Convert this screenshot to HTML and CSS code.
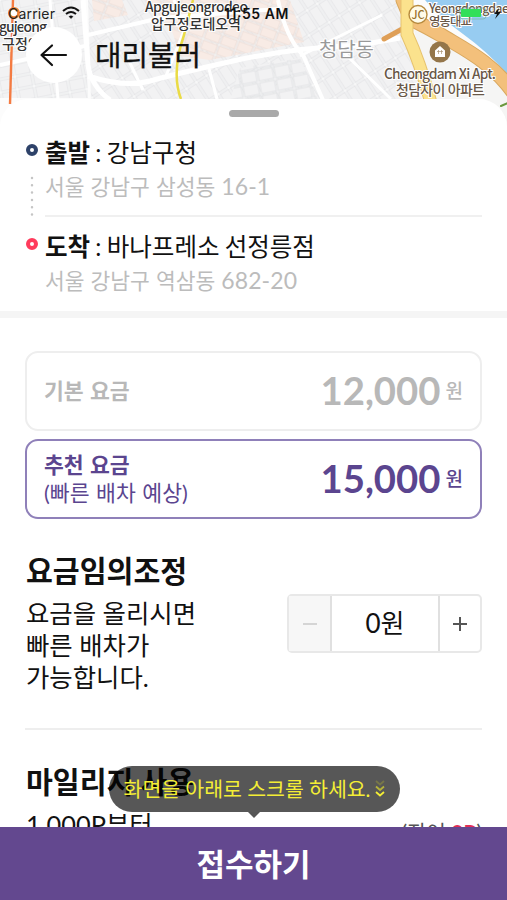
FILE: index.html
```html
<!DOCTYPE html>
<html lang="ko">
<head>
<meta charset="utf-8">
<title>대리불러</title>
<link rel="stylesheet" href="styles.css">
</head>
<body>
<div class="app">
  <svg class="map" viewBox="0 0 507 135" width="507" height="135">
    <defs>
      <pattern id="blocks" width="17" height="13" patternUnits="userSpaceOnUse" patternTransform="rotate(-11)">
        <rect x="1" y="1" width="15" height="11" fill="#f2f2f3" stroke="#dfe0e2" stroke-width=".8"/>
      </pattern>
      <pattern id="slant" width="12" height="22" patternUnits="userSpaceOnUse" patternTransform="rotate(-33)">
        <rect x="1" y="1" width="10" height="20" fill="#f2f2f3" stroke="#dcdde0" stroke-width=".8"/>
      </pattern>
      <pattern id="shops" width="17" height="11" patternUnits="userSpaceOnUse" patternTransform="rotate(20)">
        <rect x="1" y="1" width="15" height="9" fill="#f8ebe5" stroke="#eadbd4" stroke-width=".8"/>
      </pattern>
    </defs>
    <rect width="507" height="135" fill="#fcfcfc"/>
    <path d="M0 0H84L88 98H0Z" fill="url(#blocks)"/>
    <path d="M88 0H400L430 135H92Z" fill="url(#slant)"/>
    <path d="M92 0h30l6 15-34 6zM145 0H290l14 42-94 18-30-4-9-28z" fill="url(#shops)"/>
    <path d="M240 68 300 58 318 100H230Z" fill="url(#blocks)"/>
    <g fill="none" stroke="#fff">
      <path d="M83 0 88 65Q91 86 110 100M88 76Q125 88 150 81T233 61T360 45L400 38" stroke-width="5"/>
      <path d="M278 0Q286 38 303 55L323 100M0 65 85 46M88 35 160 18 278 9" stroke-width="4"/>
      <path d="M126 55 143 90M174 0 185 28 166 76M209 69 217 99M340 49 391 99M300 56 382 15M50 0 58 99" stroke-width="3"/>
    </g>
    <path d="M425 0H507V74Q488 52 463 34T425 0Z" fill="#97ccf1"/>
    <path d="M414 30Q460 45 482 64T507 96V135H440Z" fill="#f5f5f4"/>
    <g fill="none" stroke-linecap="round">
      <path d="M384 39 404 28Q410 22 409 9" stroke="#df9f57" stroke-width="5"/>
      <path d="M403 0 411 19Q427 27 441 35C462 48 493 62 515 95" stroke="#d9a85f" stroke-width="15"/>
      <path d="M403 0 411 19Q427 27 441 35C462 48 493 62 515 95" stroke="#f3c07b" stroke-width="13"/>
      <path d="M407 0 407 34Q420 62 431 103" stroke="#e7c36e" stroke-width="13"/>
      <path d="M407 0 407 34Q420 62 431 103" stroke="#fbe28d" stroke-width="11"/>
      <path d="M501 106 510 102" stroke="#6b983e" stroke-width="2"/>
    </g>
    <path d="M193 0 184 35Q171 73 181 99" fill="none" stroke="#eadb45" stroke-width="2.5"/>
    <path d="M13 0 10 104" stroke="#f47b42" stroke-width="2.4"/>
    <circle cx="14" cy="13" r="4.6" fill="#fff" stroke="#ee7f30" stroke-width="2.8"/>
    <circle cx="418" cy="14.500" r="9" fill="#fffbe8" stroke="#b78a3d" stroke-width="1.4"/>
    <text class="jc" x="411.500" y="18.500" textLength="13">JC</text>
    <circle cx="440" cy="52" r="10.500" fill="#94764a"/>
    <path d="M435 50.500 440 46 445 50.500V57H435Z" fill="#fff"/>
    <path d="M438.500 50v4M441.500 50v4M437 51.500h6" stroke="#aa9471" stroke-width=".7"/>
    <g class="place">
      <text x="145" y="12" textLength="103">Apgujeongrodeo</text>
      <text x="151" y="29" textLength="90">압구정로데오역</text>
      <text x="-1" y="32" textLength="48">gujeong</text>
      <text x="2" y="49" textLength="39">구정역</text>
    </g>
    <g class="place brown">
      <text class="small" x="429" y="12.500" textLength="80">Yeongdongdae</text>
      <text class="small" x="429" y="26" textLength="43">영동대교</text>
      <text x="384" y="79" textLength="112">Cheongdam Xi Apt.</text>
      <text x="396" y="95" textLength="89">청담자이 아파트</text>
    </g>
    <text class="district" x="319" y="57" textLength="55">청담동</text>
    <text class="status" x="8" y="19" textLength="47">Carrier</text>
    <text class="status clock" x="224" y="18.500" textLength="64.500">11:55 AM</text>
    <g fill="none" stroke="#111" stroke-width="2">
      <path d="M63 11Q71 4 79 11M66 14Q71 10 76 14"/>
      <path d="M69 16.500 71 18.500 73 16.500Q71 15 69 16.500Z" fill="#111" stroke-width=".5"/>
    </g>
    <rect x="460" y="8" width="26" height="11" rx="3" fill="none" stroke="#77b4a0" stroke-width=".7"/>
    <rect x="461" y="9" width="20" height="8" rx="1" fill="#32df59"/>
    <path d="M499 8 494 14H497L495 19 501 12H498Z" fill="#111"/>
  </svg>

  <header class="header">
    <button class="back" aria-label="뒤로">
      <svg width="56" height="56" viewBox="0 0 56 56"><path d="M40 28H16M26 18.500 15.500 28 26 38" fill="none" stroke="#111" stroke-width="2.2" stroke-linecap="round" stroke-linejoin="round"/></svg>
    </button>
    <h1 class="title">대리불러</h1>
  </header>

  <main class="sheet">
    <div class="handle"></div>
    <section class="route">
      <div class="rail">
        <i class="dot"></i>
        <svg class="dots" width="4" height="42" viewBox="0 0 4 42"><path d="M2 2V41" stroke="#c5c5c5" stroke-width="2.500" stroke-linecap="round" stroke-dasharray="0 7.300"/></svg>
        <i class="dot dot-end"></i>
      </div>
      <div class="stops">
        <div class="stop">
          <p class="name"><b>출발</b> : 강남구청</p>
          <p class="address">서울 강남구 삼성동 <span class="lot">16-1</span></p>
        </div>
        <div class="stop">
          <p class="name"><b>도착</b> : 바나프레소 선정릉점</p>
          <p class="address">서울 강남구 역삼동 <span class="lot">682-20</span></p>
        </div>
      </div>
    </section>

    <section class="fares">
      <div class="fare">
        <p class="fare-label"><b>기본 요금</b></p>
        <p class="price"><span class="amount">12,000</span><span class="won">원</span></p>
      </div>
      <div class="fare selected">
        <p class="fare-label"><b>추천 요금</b><br>(빠른 배차 예상)</p>
        <p class="price"><span class="amount">15,000</span><span class="won">원</span></p>
      </div>
    </section>

    <section class="adjust">
      <div>
        <h2>요금임의조정</h2>
        <p class="desc">요금을 올리시면<br>빠른 배차가<br>가능합니다.</p>
      </div>
      <div class="stepper">
        <button class="step off" aria-label="감소"><svg width="14" height="14"><path d="M0 7H14" stroke="#d5d5d5" stroke-width="2"/></svg></button>
        <span class="value">0원</span>
        <button class="step" aria-label="증가"><svg width="14" height="14"><path d="M0 7H14M7 0V14" stroke="#555" stroke-width="2"/></svg></button>
      </div>
    </section>

    <section class="mileage">
      <h2>마일리지 사용</h2>
      <div class="mileage-row">
        <p class="desc">1,000P부터</p>
        <p class="balance">(잔여 <b>0P</b>)</p>
      </div>
    </section>
  </main>

  <div class="hint">
    <span>화면을 아래로 스크롤 하세요.</span>
    <svg width="10" height="18" viewBox="0 0 10 18" fill="none" stroke-width="1.8"><path d="M1 1 5 4.500 9 1" stroke="#777748"/><path d="M1 6.500 5 10 9 6.500" stroke="#b5b33a"/><path d="M1 12 5 15.500 9 12" stroke="#f4ee35"/></svg>
  </div>
  <button class="submit">접수하기</button>
</div>
</body>
</html>
```
FILE: styles.css
```css
* { box-sizing: border-box; margin: 0; padding: 0; }
body { width: 507px; height: 900px; overflow: hidden; background: #fff; color: #111; font-family: Lato, "Noto Sans CJK KR", sans-serif; }
button { border: 0; background: none; font: inherit; }
.app { position: relative; display: flex; flex-direction: column; height: 900px; overflow: hidden; }
.map { position: absolute; top: 0; left: 0; }
.map text { font-family: "Noto Sans CJK KR", sans-serif; }
.place text { font-size: 14px; font-weight: 500; fill: #333; stroke: #fff; stroke-width: 2px; paint-order: stroke; }
.map .brown text { fill: #695747; }
.map .place .small { font-size: 12.500px; }
.map .jc { font-size: 11px; font-weight: 500; fill: #98722f; }
.map .district { font-size: 20px; fill: #999; stroke: #fff; stroke-width: 2px; paint-order: stroke; }
.map .status { font-family: Inter, sans-serif; font-size: 14px; fill: #222; }
.map .clock { font-weight: 600; fill: #111; }

.header { position: relative; display: flex; gap: 13px; height: 99px; padding: 27px 0 0 26px; flex: none; }
.back { width: 56px; height: 56px; border-radius: 50%; background: #fff; }
.back svg { display: block; }
.title { font-size: 28.800px; font-weight: 400; line-height: 56px; -webkit-text-stroke: .3px #111; }

.sheet { position: relative; flex: none; height: 801px; background: #fff; border-radius: 28px 28px 0 0; }
.handle { width: 50px; height: 7px; margin: 0 auto; border-radius: 4px; background: #a9a9a9; transform: translateY(11px); }
.route { display: flex; height: 212px; padding: 28px 25px 0; border-bottom: 7px solid #f5f5f5; }
.rail { display: flex; flex-direction: column; align-items: center; width: 13px; margin-right: 7px; padding-top: 10px; }
.dot { width: 12px; height: 12px; border: 4px solid #2e4269; border-radius: 50%; }
.dot-end { border-color: #ff3b5c; }
.dots { margin: 20px 0; }
.stops { flex: 1; }
.stop { height: 94px; }
.stop:first-child { height: 83px; margin-bottom: 11px; border-bottom: 2px solid #f0f0f0; }
.name { font-size: 24.500px; line-height: 37px; word-spacing: -1px; }
.address { font-size: 21.500px; line-height: 31px; color: #bcbcbc; word-spacing: .5px; }
.lot { font-size: 23px; letter-spacing: .1px; }

.fares { display: flex; flex-direction: column; gap: 8px; padding: 33px 25px 0; }
.fare { display: flex; align-items: center; justify-content: space-between; height: 80px; padding: 0 17px; border: 2px solid #eee; border-radius: 13px; color: #b8b8b8; }
.selected { border-color: #8f80b9; color: #5b458f; }
.fare-label { font-size: 21.600px; line-height: 28px; word-spacing: 1px; }
.price { display: flex; align-items: center; gap: 5px; padding-bottom: 2px; }
.amount { font-size: 38.300px; font-weight: 700; line-height: 50px; }
.won { font-size: 19px; font-weight: 500; transform: translateY(-1px); }

.adjust { display: flex; justify-content: space-between; height: 211px; margin: 0 25px; padding: 31px 0 0 1px; border-bottom: 2px solid #eee; }
h2 { font-size: 29.200px; font-weight: 700; line-height: 42px; }
.desc { font-size: 25.400px; line-height: 32px; padding-top: 5px; }
.stepper { display: flex; width: 195px; height: 59px; margin-top: 44px; border: 2px solid #e8e8e8; border-radius: 5px; }
.step { display: flex; align-items: center; justify-content: center; width: 42px; border-left: 2px solid #e0e0e0; }
.off { width: 43px; border-left: 0; border-right: 2px solid #e0e0e0; background: #f7f7f7; }
.value { flex: 1; text-align: center; font-size: 26px; line-height: 54px; }
.mileage { padding: 31px 25px 0 26px; }
.mileage-row { display: flex; justify-content: space-between; }
.balance { padding-top: 15px; font-size: 21px; line-height: 28px; color: #555; }
.balance b { color: #e22e58; }

.hint { position: absolute; left: 109px; top: 766px; display: flex; align-items: center; justify-content: center; gap: 5px; width: 291px; height: 46px; border-radius: 23px; background: rgba(0, 0, 0, .66); color: #f4ee35; font-size: 20.500px; line-height: 46px; white-space: nowrap; }
.hint::after { content: ""; position: absolute; top: 46px; left: 139px; border: 6px solid transparent; border-top-color: #555; border-bottom: 0; }
.submit { position: absolute; left: 0; bottom: 0; width: 507px; height: 73px; background: #63488f; color: #fff; font-size: 31px; font-weight: 700; line-height: 70px; }
```
